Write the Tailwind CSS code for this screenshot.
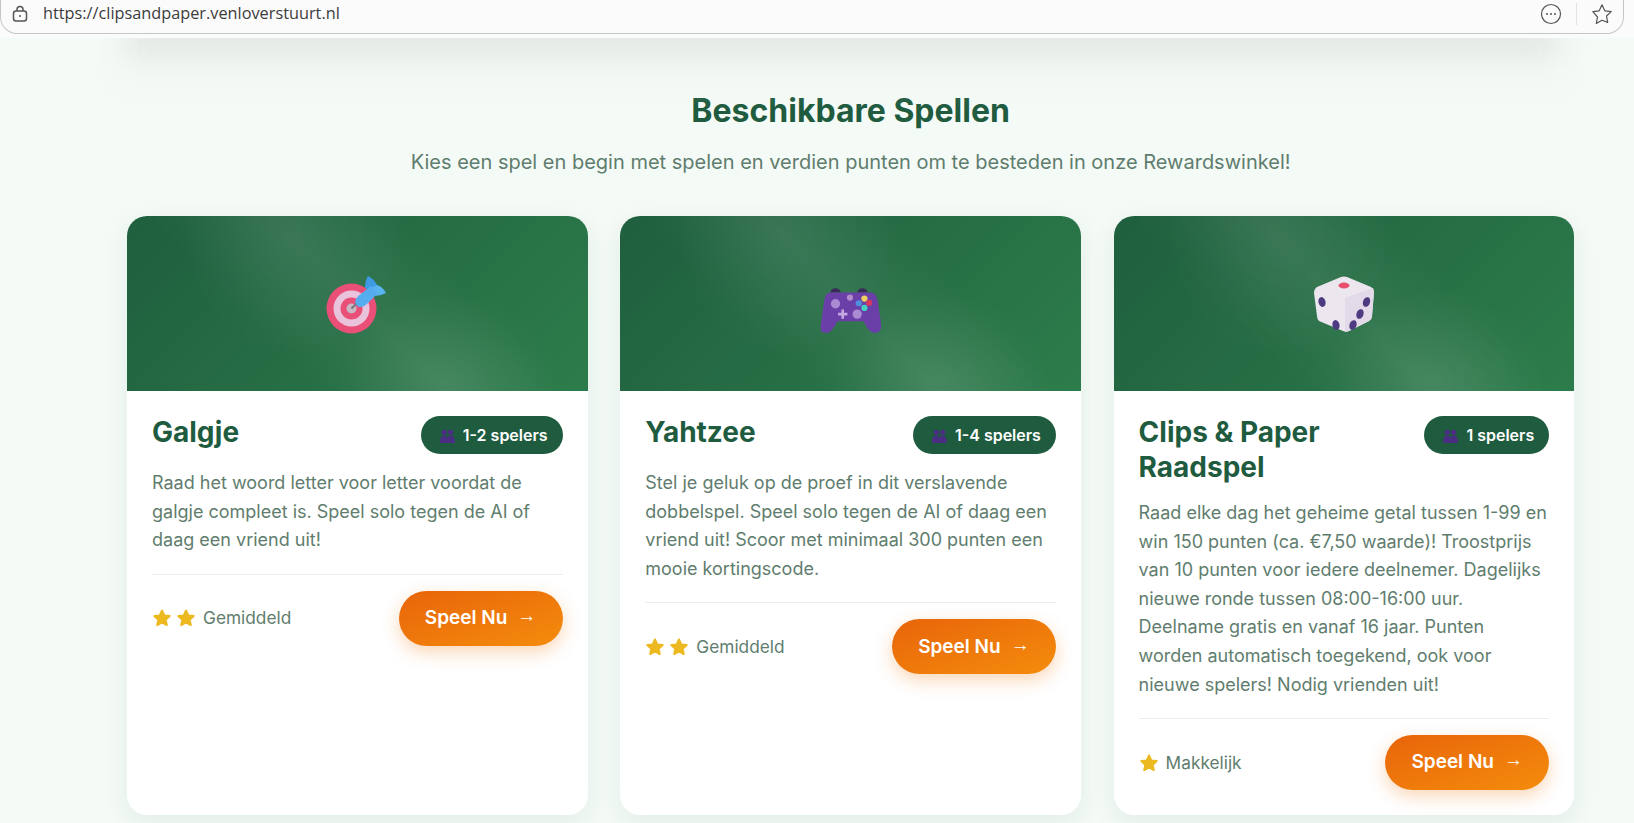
<!DOCTYPE html>
<html lang="nl">
<head>
<meta charset="utf-8">
<title>Beschikbare Spellen</title>
<script src="https://cdn.jsdelivr.net/npm/@tailwindcss/browser@4"></script>
</head>
<body class="h-[823px] overflow-hidden bg-[#f4faf6] font-['Inter',sans-serif] text-[#1f5c3f]">
  <div class="relative z-10 h-[38px] bg-[#fbfbfb]">
    <div class="mr-[10px] flex h-[34px] items-center rounded-b-[17px] border-b border-l border-r border-[#c4c6c6] bg-[#fbfbfb] pb-[6px] pl-[10px] pr-[10px] font-['Open_Sans',sans-serif] text-[16.3px] text-[#3b3b3b]">
      <svg class="h-[18px] w-[18px]" viewBox="0 0 18 18" fill="none" stroke="#555" stroke-width="1.5"><rect x="2.5" y="6" width="13" height="10" rx="2.5"/><path d="M6 6V4.5a3 3 0 0 1 6 0V6"/><circle cx="9" cy="11" r="1" fill="#555" stroke="none"/></svg>
      <span class="ml-[14px]">https://clipsandpaper.venloverstuurt.nl</span>
      <svg class="ml-auto h-[22px] w-[22px]" viewBox="0 0 22 22" fill="none" stroke="#555" stroke-width="1.2"><circle cx="11" cy="11" r="9.5"/><circle cx="7" cy="11" r="1" fill="#555" stroke="none"/><circle cx="11" cy="11" r="1" fill="#555" stroke="none"/><circle cx="15" cy="11" r="1" fill="#555" stroke="none"/></svg>
      <span class="mx-[14px] h-[22px] w-px bg-[#e2e2e2]"></span>
      <svg class="h-[22px] w-[22px]" viewBox="0 0 22 22" fill="none" stroke="#555" stroke-width="1.2" stroke-linejoin="round"><path d="M11 1.8l2.8 6 6.4.8-4.7 4.4 1.2 6.4L11 17.2l-5.7 3.2 1.2-6.4L1.8 8.6l6.4-.8z"/></svg>
    </div>
  </div>
  <div class="ml-[125px] mr-[75px] -mt-[14px] h-[52px] bg-gradient-to-b from-[#dadedc] to-[#f4faf6] blur-[14px]"></div>

  <main class="pl-[127px] pr-[59.8px]">
    <h2 class="mt-[16px] text-center text-[32px] font-bold leading-[38px] text-[#1f5c3f]">Beschikbare Spellen</h2>
    <p class="mt-[18px] text-center text-[20px] leading-[28px] text-[#5f7d6e]">Kies een spel en begin met spelen en verdien punten om te besteden in onze Rewardswinkel!</p>

    <div class="mt-[40px] grid grid-cols-3 gap-[32.7px]">
      <!-- Galgje -->
      <article class="overflow-hidden rounded-[20px] bg-white shadow-[0_8px_24px_rgba(31,92,63,0.08)]">
        <div class="flex h-[175px] items-center justify-center bg-[radial-gradient(ellipse_110px_120px_at_165px_20px,rgba(255,255,255,0.05),transparent),radial-gradient(ellipse_110px_90px_at_320px_165px,rgba(255,255,255,0.08),transparent),linear-gradient(45deg,transparent_30%,rgba(255,255,255,0.06)_50%,transparent_70%),linear-gradient(135deg,#1f5f3e,#2d7c4b)]">
          <svg class="h-[62px] w-[62px]" viewBox="0 0 62 62">
            <circle cx="25.500" cy="35.500" r="25" fill="#ea4f78"/><circle cx="25.500" cy="35.500" r="18" fill="#e9c3dc"/><circle cx="25.500" cy="35.500" r="11" fill="#ea4f78"/><circle cx="25.500" cy="35.500" r="5" fill="#c9b7c6"/>
            <path d="M25.500 35.500L33 28" stroke="#777" stroke-width="2"/>
            <path d="M39 15Q39 8 42 3Q48 6 51 12L48 20z" fill="#3f9ae4"/>
            <path d="M46 22Q53 24 60 20Q57 14 51 12L44 16z" fill="#5ab4f0"/>
            <path d="M29 29Q30 24 36 20L45 13L52 20L42 30Q36 36 31 33z" fill="#55acee"/>
          </svg>
        </div>
        <div class="p-[25px]">
          <div class="flex items-start justify-between gap-4">
            <h3 class="-mt-px text-[28px] font-bold leading-[34.5px] text-[#1f5c3f]">Galgje</h3>
            <span class="flex h-[38px] shrink-0 items-center gap-[7px] rounded-full bg-[#1f5c3f] pl-[18px] pr-[15px] text-[16px] font-semibold text-white">
              <svg class="h-[17px] w-[17px]" viewBox="0 0 16 16" fill="#4b2e83"><circle cx="5" cy="5" r="2.500"/><circle cx="11" cy="5" r="2.500"/><path d="M1 15q0-7 4-7t3 7zM8 15q-1-7 3-7t4 7z"/></svg>1-2 spelers
            </span>
          </div>
          <p class="mt-[15px] text-[18px] leading-[28.6px] text-[#5f7d6e]">Raad het woord letter voor letter voordat de galgje compleet is. Speel solo tegen de AI of daag een vriend uit!</p>
          <div class="mt-[19px] flex items-center justify-between border-t border-[#e8eeea] pt-[16px]">
            <div class="flex items-center text-[17.3px] text-[#5f7d6e]">
              <svg class="h-[20px] w-[20px]" viewBox="0 0 20 20" fill="#ecb920" stroke="#ecb920" stroke-width="2" stroke-linejoin="round"><path d="M10 2.5l2.3 5 5.4.6-4 3.7 1.1 5.3-4.8-2.7-4.8 2.7 1.1-5.3-4-3.7 5.4-.6z"/></svg>
              <svg class="ml-[4px] h-[20px] w-[20px]" viewBox="0 0 20 20" fill="#ecb920" stroke="#ecb920" stroke-width="2" stroke-linejoin="round"><path d="M10 2.5l2.3 5 5.4.6-4 3.7 1.1 5.3-4.8-2.7-4.8 2.7 1.1-5.3-4-3.7 5.4-.6z"/></svg>
              <span class="ml-[7px]">Gemiddeld</span>
            </div>
            <a class="flex h-[55px] w-[164px] items-center justify-center gap-[10px] rounded-full bg-gradient-to-br from-[#e8640a] to-[#f48c0c] text-[19px] font-semibold text-white shadow-[0_6px_18px_rgba(240,120,10,0.3)]">Speel Nu <span class="-translate-y-[2px] font-['Liberation_Sans',sans-serif] text-[19px] font-normal">→</span></a>
          </div>
        </div>
      </article>

      <!-- Yahtzee -->
      <article class="overflow-hidden rounded-[20px] bg-white shadow-[0_8px_24px_rgba(31,92,63,0.08)]">
        <div class="flex h-[175px] items-center justify-center bg-[radial-gradient(ellipse_110px_120px_at_165px_20px,rgba(255,255,255,0.05),transparent),radial-gradient(ellipse_110px_90px_at_320px_165px,rgba(255,255,255,0.08),transparent),linear-gradient(45deg,transparent_30%,rgba(255,255,255,0.06)_50%,transparent_70%),linear-gradient(135deg,#1f5f3e,#2d7c4b)]">
          <svg class="mt-[14px] h-[48px] w-[62px]" viewBox="0 -2 60 46">
            <path d="M10 3q1-4 5-4t5 4zM36 3q1-4 5-4t5 4z" fill="#3a2a58"/>
            <path d="M9 3H50Q55 4 56 12L59 33Q60 42 54 42Q49 43 45 36L42 31H17L14 36Q10 43 5 42Q-1 42 1 33L4 12Q5 4 9 3z" fill="#6b3fa8"/>
            <circle cx="15" cy="14" r="4.500" fill="#a88bd0"/><circle cx="29" cy="8" r="3" fill="#b08cc8"/>
            <circle cx="37.500" cy="13.500" r="3" fill="#4f8fe0"/><circle cx="43" cy="9" r="3" fill="#ecd060"/><circle cx="47.500" cy="13" r="3" fill="#d8385c"/><circle cx="43" cy="18" r="3" fill="#46d0c0"/>
            <circle cx="36" cy="24" r="4.500" fill="#a88bd0"/>
            <path d="M22 19.500v9M17.500 24h9" stroke="#c3aae0" stroke-width="2.500"/>
          </svg>
        </div>
        <div class="p-[25px]">
          <div class="flex items-start justify-between gap-4">
            <h3 class="-mt-px text-[28px] font-bold leading-[34.5px] text-[#1f5c3f]">Yahtzee</h3>
            <span class="flex h-[38px] shrink-0 items-center gap-[7px] rounded-full bg-[#1f5c3f] pl-[18px] pr-[15px] text-[16px] font-semibold text-white">
              <svg class="h-[17px] w-[17px]" viewBox="0 0 16 16" fill="#4b2e83"><circle cx="5" cy="5" r="2.500"/><circle cx="11" cy="5" r="2.500"/><path d="M1 15q0-7 4-7t3 7zM8 15q-1-7 3-7t4 7z"/></svg>1-4 spelers
            </span>
          </div>
          <p class="mt-[15px] text-[18px] leading-[28.6px] text-[#5f7d6e]">Stel je geluk op de proef in dit verslavende dobbelspel. Speel solo tegen de AI of daag een vriend uit! Scoor met minimaal 300 punten een mooie kortingscode.</p>
          <div class="mt-[19px] flex items-center justify-between border-t border-[#e8eeea] pt-[16px]">
            <div class="flex items-center text-[17.3px] text-[#5f7d6e]">
              <svg class="h-[20px] w-[20px]" viewBox="0 0 20 20" fill="#ecb920" stroke="#ecb920" stroke-width="2" stroke-linejoin="round"><path d="M10 2.5l2.3 5 5.4.6-4 3.7 1.1 5.3-4.8-2.7-4.8 2.7 1.1-5.3-4-3.7 5.4-.6z"/></svg>
              <svg class="ml-[4px] h-[20px] w-[20px]" viewBox="0 0 20 20" fill="#ecb920" stroke="#ecb920" stroke-width="2" stroke-linejoin="round"><path d="M10 2.5l2.3 5 5.4.6-4 3.7 1.1 5.3-4.8-2.7-4.8 2.7 1.1-5.3-4-3.7 5.4-.6z"/></svg>
              <span class="ml-[7px]">Gemiddeld</span>
            </div>
            <a class="flex h-[55px] w-[164px] items-center justify-center gap-[10px] rounded-full bg-gradient-to-br from-[#e8640a] to-[#f48c0c] text-[19px] font-semibold text-white shadow-[0_6px_18px_rgba(240,120,10,0.3)]">Speel Nu <span class="-translate-y-[2px] font-['Liberation_Sans',sans-serif] text-[19px] font-normal">→</span></a>
          </div>
        </div>
      </article>

      <!-- Clips & Paper -->
      <article class="overflow-hidden rounded-[20px] bg-white shadow-[0_8px_24px_rgba(31,92,63,0.08)]">
        <div class="flex h-[175px] items-center justify-center bg-[radial-gradient(ellipse_110px_120px_at_165px_20px,rgba(255,255,255,0.05),transparent),radial-gradient(ellipse_110px_90px_at_320px_165px,rgba(255,255,255,0.08),transparent),linear-gradient(45deg,transparent_30%,rgba(255,255,255,0.06)_50%,transparent_70%),linear-gradient(135deg,#1f5f3e,#2d7c4b)]">
          <svg class="h-[58px] w-[60px]" viewBox="0 0 60 56">
            <path d="M27 1Q30 0 33 1L57 11Q60 13 60 16L58 40Q58 43 55 45L35 55Q32 56 29 55L5 45Q3 43 3 40L0 17Q0 13 3 11z" fill="#ece6ee"/>
            <path d="M31 22L59 12Q60 14 60 16L58 40Q58 43 55 45L35 55Q32 56 31 56z" fill="#e2dae8"/>
            <ellipse cx="30" cy="9.500" rx="5.500" ry="3" fill="#e8506e"/>
            <ellipse cx="8" cy="26" rx="3.500" ry="5" transform="rotate(-15 8 26)" fill="#4d3a80"/><ellipse cx="22" cy="49" rx="3.500" ry="5" transform="rotate(-15 22 49)" fill="#4d3a80"/>
            <ellipse cx="52.500" cy="26" rx="3.500" ry="5" transform="rotate(20 52.500 26)" fill="#4d3a80"/><ellipse cx="46" cy="38" rx="3.500" ry="5" transform="rotate(20 46 38)" fill="#4d3a80"/><ellipse cx="39" cy="49" rx="3.500" ry="5" transform="rotate(20 39 49)" fill="#4d3a80"/>
          </svg>
        </div>
        <div class="p-[25px]">
          <div class="flex items-start justify-between gap-4">
            <h3 class="-mt-px text-[28px] font-bold leading-[34.5px] text-[#1f5c3f]">Clips &amp; Paper Raadspel</h3>
            <span class="flex h-[38px] shrink-0 items-center gap-[7px] rounded-full bg-[#1f5c3f] pl-[18px] pr-[15px] text-[16px] font-semibold text-white">
              <svg class="h-[17px] w-[17px]" viewBox="0 0 16 16" fill="#4b2e83"><circle cx="5" cy="5" r="2.500"/><circle cx="11" cy="5" r="2.500"/><path d="M1 15q0-7 4-7t3 7zM8 15q-1-7 3-7t4 7z"/></svg>1 spelers
            </span>
          </div>
          <p class="mt-[15px] text-[18px] leading-[28.6px] text-[#5f7d6e]">Raad elke dag het geheime getal tussen 1-99 en win 150 punten (ca. €7,50 waarde)! Troostprijs van 10 punten voor iedere deelnemer. Dagelijks nieuwe ronde tussen 08:00-16:00 uur. Deelname gratis en vanaf 16 jaar. Punten worden automatisch toegekend, ook voor nieuwe spelers! Nodig vrienden uit!</p>
          <div class="mt-[19px] flex items-center justify-between border-t border-[#e8eeea] pt-[16px]">
            <div class="flex items-center text-[17.3px] text-[#5f7d6e]">
              <svg class="h-[20px] w-[20px]" viewBox="0 0 20 20" fill="#ecb920" stroke="#ecb920" stroke-width="2" stroke-linejoin="round"><path d="M10 2.5l2.3 5 5.4.6-4 3.7 1.1 5.3-4.8-2.7-4.8 2.7 1.1-5.3-4-3.7 5.4-.6z"/></svg>
              <span class="ml-[7px]">Makkelijk</span>
            </div>
            <a class="flex h-[55px] w-[164px] items-center justify-center gap-[10px] rounded-full bg-gradient-to-br from-[#e8640a] to-[#f48c0c] text-[19px] font-semibold text-white shadow-[0_6px_18px_rgba(240,120,10,0.3)]">Speel Nu <span class="-translate-y-[2px] font-['Liberation_Sans',sans-serif] text-[19px] font-normal">→</span></a>
          </div>
        </div>
      </article>
    </div>
  </main>
</body>
</html>
